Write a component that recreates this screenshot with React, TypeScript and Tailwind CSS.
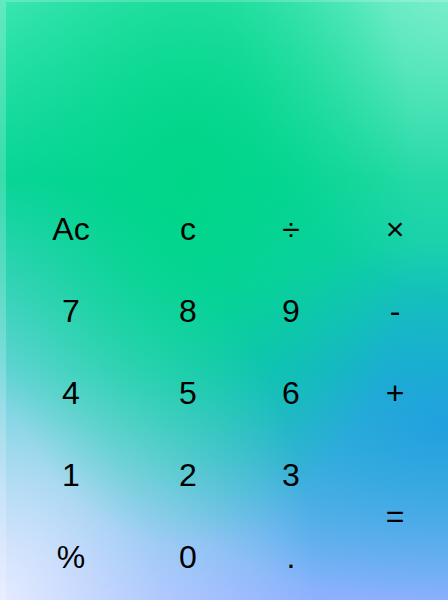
const rows: { label: string; span?: boolean }[][] = [
  [{ label: "Ac" }, { label: "c" }, { label: "÷" }, { label: "×" }],
  [{ label: "7" }, { label: "8" }, { label: "9" }, { label: "-" }],
  [{ label: "4" }, { label: "5" }, { label: "6" }, { label: "+" }],
  [{ label: "1" }, { label: "2" }, { label: "3" }, { label: "=", span: true }],
  [{ label: "%" }, { label: "0" }, { label: "." }],
];

const Key = ({ label, span }: { label: string; span?: boolean }) => (
  <button
    type="button"
    className={
      span
        ? "row-span-2 flex items-center justify-center text-[32px] text-black"
        : "flex items-center justify-center text-[32px] text-black"
    }
  >
    {label}
  </button>
);

export default function App() {
  return (
    <div
      className="flex h-[600px] w-[448px] flex-col overflow-hidden border-t-2 border-l-[6px] border-white/20 bg-origin-border bg-no-repeat bg-[radial-gradient(ellipse_at_42%_30%,#00d688_0%,rgba(0,214,136,0.55)_28%,rgba(0,214,136,0)_62%),radial-gradient(ellipse_at_0%_100%,rgba(232,238,255,0.95)_0%,rgba(232,238,255,0.4)_25%,rgba(232,238,255,0)_50%),radial-gradient(ellipse_at_100%_0%,rgba(255,255,255,0.3)_0%,rgba(255,255,255,0)_35%),radial-gradient(ellipse_70%_30%_at_100%_71%,rgba(28,150,228,0.75)_0%,rgba(28,150,228,0)_100%),linear-gradient(to_bottom,#3ee6b4_0%,#08d49a_30%,#18c4c0_62%,#8eb0ff_100%)] font-['Liberation_Sans',Arial,sans-serif]"
    >
      <div className="h-[186px] shrink-0" />
      <div className="grid grid-cols-[130px_104px_102px_106px] auto-rows-[82px]">
        {rows.flat().map((k, i) => (
          <Key key={i} label={k.label} span={k.span} />
        ))}
      </div>
    </div>
  );
}
